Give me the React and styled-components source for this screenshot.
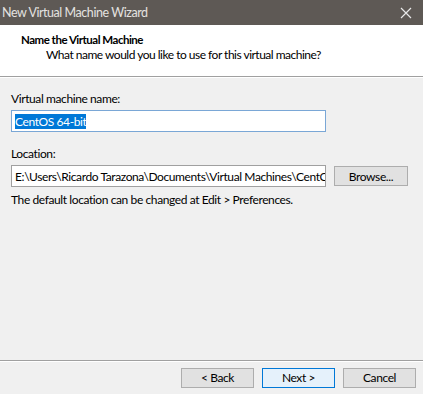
import styled, { createGlobalStyle } from "styled-components";

const Global = createGlobalStyle`
  html, body {
    margin: 0;
    padding: 0;
    background: #f0f0f0;
  }
  body {
    font-family: Lato, "Noto Sans", sans-serif;
    font-size: 12px;
    letter-spacing: -0.4px;
    color: #000;
  }
`;

const Window = styled.div`
  width: 423px;
  height: 394px;
  display: flex;
  flex-direction: column;
  background: #f0f0f0;
  overflow: hidden;
`;

const TitleBar = styled.div`
  height: 25px;
  background: #5e5955;
  color: #e4e2e0;
  display: flex;
  align-items: center;
  justify-content: space-between;
  padding: 0 11px 0 2px;
  font-size: 12.5px;
  letter-spacing: -0.45px;
`;

const Header = styled.div`
  height: 52px;
  background: #fff;
  border-bottom: 1px solid #a0a0a0;
  box-shadow: 0 1px 0 #fff;
  padding: 7px 0 0 21px;
  box-sizing: border-box;
`;

const Heading = styled.div`
  font-weight: bold;
  font-size: 11.5px;
  letter-spacing: -0.5px;
  line-height: 15px;
`;

const SubHeading = styled.div`
  padding-left: 25px;
  line-height: 15px;
  letter-spacing: -0.5px;
`;

const Body = styled.div`
  flex: 1;
  padding: 14px 15px 0 11px;
`;

const Label = styled.div`
  line-height: 16px;
  margin-bottom: 3px;
`;

const Field = styled.div`
  width: 315px;
  flex-shrink: 0;
  height: 22px;
  box-sizing: border-box;
  background: #fff;
  border: 1px solid ${(p) => (p.$focused ? "#7aa7d6" : "#a0a0a0")};
  display: flex;
  align-items: center;
  padding: 0 3px;
  white-space: nowrap;
  overflow: hidden;
  margin-bottom: ${(p) => p.$gap || 0}px;
`;

const Selected = styled.span`
  background: #0078d7;
  color: #fff;
  line-height: 15px;
`;

const Row = styled.div`
  display: flex;
  align-items: center;
  gap: 8px;
`;

const Button = styled.div`
  width: ${(p) => p.$w || 73}px;
  height: 20px;
  flex-shrink: 0;
  box-sizing: border-box;
  border: 1px solid ${(p) => (p.$default ? "#0078d7" : "#adadad")};
  background: ${(p) => (p.$default ? "#e5f1fb" : "#e1e1e1")};
  display: flex;
  align-items: center;
  justify-content: center;
`;

const Note = styled.div`
  margin-top: 5px;
  line-height: 16px;
`;

const Footer = styled.div`
  border-top: 1px solid #a0a0a0;
  box-shadow: inset 0 1px 0 #fff;
  height: 34px;
  box-sizing: border-box;
  display: flex;
  justify-content: flex-end;
  align-items: center;
  gap: 8px;
  padding: 0 7px 0 0;
`;

const Close = () => (
  <svg width="12" height="12" viewBox="0 0 12 12">
    <path d="M1 1L11 11M11 1L1 11" stroke="#e8e8e8" strokeWidth="1.2" />
  </svg>
);

export default function App() {
  return (
    <Window>
      <Global />
      <TitleBar>
        <span>New Virtual Machine Wizard</span>
        <Close />
      </TitleBar>
      <Header>
        <Heading>Name the Virtual Machine</Heading>
        <SubHeading>What name would you like to use for this virtual machine?</SubHeading>
      </Header>
      <Body>
        <Label>Virtual machine name:</Label>
        <Field $focused $gap={14}>
          <Selected>CentOS 64-bit</Selected>
        </Field>
        <Label>Location:</Label>
        <Row>
          <Field>E:\Users\Ricardo Tarazona\Documents\Virtual Machines\CentOS 64-bit</Field>
          <Button $w={74}>Browse...</Button>
        </Row>
        <Note>The default location can be changed at Edit &gt; Preferences.</Note>
      </Body>
      <Footer>
        <Button>&lt; Back</Button>
        <Button $default>Next &gt;</Button>
        <Button>Cancel</Button>
      </Footer>
    </Window>
  );
}
